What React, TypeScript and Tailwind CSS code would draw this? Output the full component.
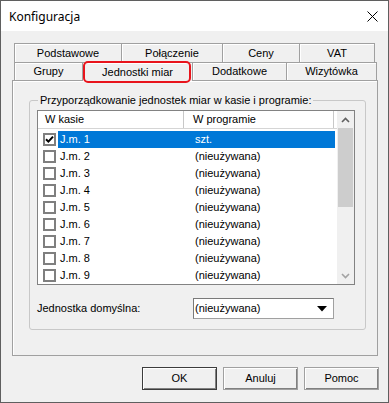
import React from "react";

const rows = [
  { k: "J.m. 1", p: "szt.", checked: true, sel: true },
  { k: "J.m. 2", p: "(nieużywana)" },
  { k: "J.m. 3", p: "(nieużywana)" },
  { k: "J.m. 4", p: "(nieużywana)" },
  { k: "J.m. 5", p: "(nieużywana)" },
  { k: "J.m. 6", p: "(nieużywana)" },
  { k: "J.m. 7", p: "(nieużywana)" },
  { k: "J.m. 8", p: "(nieużywana)" },
  { k: "J.m. 9", p: "(nieużywana)" },
];

function Tab({ label, w, last, sel }: { label: string; w: string; last?: boolean; sel?: boolean }) {
  return (
    <div
      className={`${w} flex items-center justify-center border-l border-t border-[#a0a0a0] ${last ? "border-r" : ""} ${
        sel ? "relative z-10 -mb-px bg-[#f0f0f0]" : ""
      } shadow-[inset_1px_1px_0_#ffffff]`}
    >
      {label}
    </div>
  );
}

function Checkbox({ checked }: { checked?: boolean }) {
  return (
    <div className="w-[13px] h-[13px] border-2 border-[#7f7f7f] bg-white flex items-center justify-center shrink-0">
      {checked && (
        <svg width="9" height="9" viewBox="0 0 9 9">
          <path d="M1 4.2 L3.4 6.6 L8 1.6" stroke="#000" strokeWidth="2" fill="none" />
        </svg>
      )}
    </div>
  );
}

function Btn({ label, def }: { label: string; def?: boolean }) {
  return (
    <div
      className={`w-[75px] h-[23px] flex items-center justify-center border ${
        def ? "border-[#3c3c3c]" : "border-[#a0a0a0]"
      } bg-[#f0f0f0] shadow-[inset_1px_1px_0_#ffffff,inset_-1px_-1px_0_#808080]`}
    >
      {label}
    </div>
  );
}

export default function App() {
  return (
    <div
      className="w-[389px] h-[403px] border border-[#5f5f5f] bg-[#f0f0f0] flex flex-col text-[11px] text-black leading-[13px]"
      style={{ fontFamily: '"Liberation Sans", Arial, sans-serif' }}
    >
      {/* Title bar */}
      <div className="h-[30px] bg-white flex items-center justify-between pl-[8px] pr-[10px] shrink-0">
        <span className="text-[12px]" style={{ fontFamily: '"Noto Sans", "Liberation Sans", sans-serif' }}>
          Konfiguracja
        </span>
        <svg width="11" height="11" viewBox="0 0 11 11">
          <path d="M0.5 0.5 L10.5 10.5 M10.5 0.5 L0.5 10.5" stroke="#000" strokeWidth="1" />
        </svg>
      </div>

      {/* Body */}
      <div className="flex flex-col pt-[12px] pl-[11px] pr-[10px]">
        {/* Tabs */}
        <div className="relative ml-[2px] flex flex-col">
          <div className="flex h-[19px]">
            <Tab label="Podstawowe" w="w-[107px]" />
            <Tab label="Połączenie" w="w-[101px]" />
            <Tab label="Ceny" w="w-[77px]" />
            <Tab label="VAT" w="w-[76px]" last />
          </div>
          <div className="flex h-[18px]">
            <Tab label="Grupy" w="w-[68px]" />
            <Tab label="Jednostki miar" w="w-[110px]" sel />
            <Tab label="Dodatkowe" w="w-[94px]" />
            <Tab label="Wizytówka" w="w-[91px]" last />
          </div>
          {/* red highlight */}
          <div className="absolute left-[69px] top-[18px] w-[108px] h-[22px] border-2 border-[#e8141c] rounded-[5px] z-20" />
        </div>

        {/* Panel */}
        <div className="w-[366px] h-[276px] border border-[#a0a0a0] shadow-[inset_1px_1px_0_#ffffff] pt-[19px] pl-[16px]">
          {/* Group box */}
          <div className="relative w-[337px] h-[230px] border border-[#c8c8c8] rounded-[3px] pt-[9px] pl-[7px] flex flex-col">
            <span className="absolute left-[8px] top-[-7px] bg-[#f0f0f0] px-[2px]">
              Przyporządkowanie jednostek miar w kasie i programie:
            </span>

            {/* List */}
            <div className="w-[318px] h-[175px] border border-[#828282] bg-white flex">
              <div className="w-[299px] flex flex-col">
                <div className="h-[18px] flex border-b border-[#d5d5d5] bg-white">
                  <div className="w-[146px] border-r border-[#c8c8c8] pl-[7px] flex items-center">W kasie</div>
                  <div className="w-[150px] border-r border-[#c8c8c8] pl-[9px] flex items-center">W programie</div>
                </div>
                <div className="pt-[2px] flex flex-col">
                  {rows.map((r) => (
                    <div key={r.k} className="h-[17px] flex items-center pl-[5px]">
                      <Checkbox checked={r.checked} />
                      <div
                        className={`ml-[2px] w-[277px] h-[17px] flex items-center ${
                          r.sel ? "bg-[#0078d7] text-white" : ""
                        }`}
                      >
                        <div className="w-[127px] pl-[2px]">{r.k}</div>
                        <div className="pl-[10px]">{r.p}</div>
                      </div>
                    </div>
                  ))}
                </div>
              </div>
              {/* Scrollbar */}
              <div className="w-[17px] bg-[#f0f0f0] flex flex-col items-center">
                <div className="h-[17px] w-full flex items-center justify-center">
                  <svg width="9" height="6" viewBox="0 0 9 6">
                    <path d="M1 5 L4.5 1.5 L8 5" stroke="#606060" strokeWidth="1.6" fill="none" />
                  </svg>
                </div>
                <div className="w-[15px] h-[79px] bg-[#cdcdcd]" />
                <div className="flex-1" />
                <div className="h-[17px] w-full flex items-center justify-center">
                  <svg width="9" height="6" viewBox="0 0 9 6">
                    <path d="M1 1 L4.5 4.5 L8 1" stroke="#a3a3a3" strokeWidth="1.6" fill="none" />
                  </svg>
                </div>
              </div>
            </div>

            {/* Default unit */}
            <div className="mt-[13px] flex items-center h-[21px]">
              <span className="w-[156px]">Jednostka domyślna:</span>
              <div className="w-[141px] h-[21px] bg-white border border-[#a0a0a0] border-l-[#7a7a7a] border-t-[#7a7a7a] flex items-center justify-between pl-[1px] pr-[6px]">
                <span>(nieużywana)</span>
                <svg width="10" height="6" viewBox="0 0 10 6">
                  <path d="M0 0 L10 0 L5 5.5 Z" fill="#000" />
                </svg>
              </div>
            </div>
          </div>
        </div>

        {/* Buttons */}
        <div className="mt-[11px] flex justify-end gap-[6px] pr-[0px] mr-[-1px]">
          <Btn label="OK" def />
          <Btn label="Anuluj" />
          <Btn label="Pomoc" />
        </div>
      </div>
    </div>
  );
}
